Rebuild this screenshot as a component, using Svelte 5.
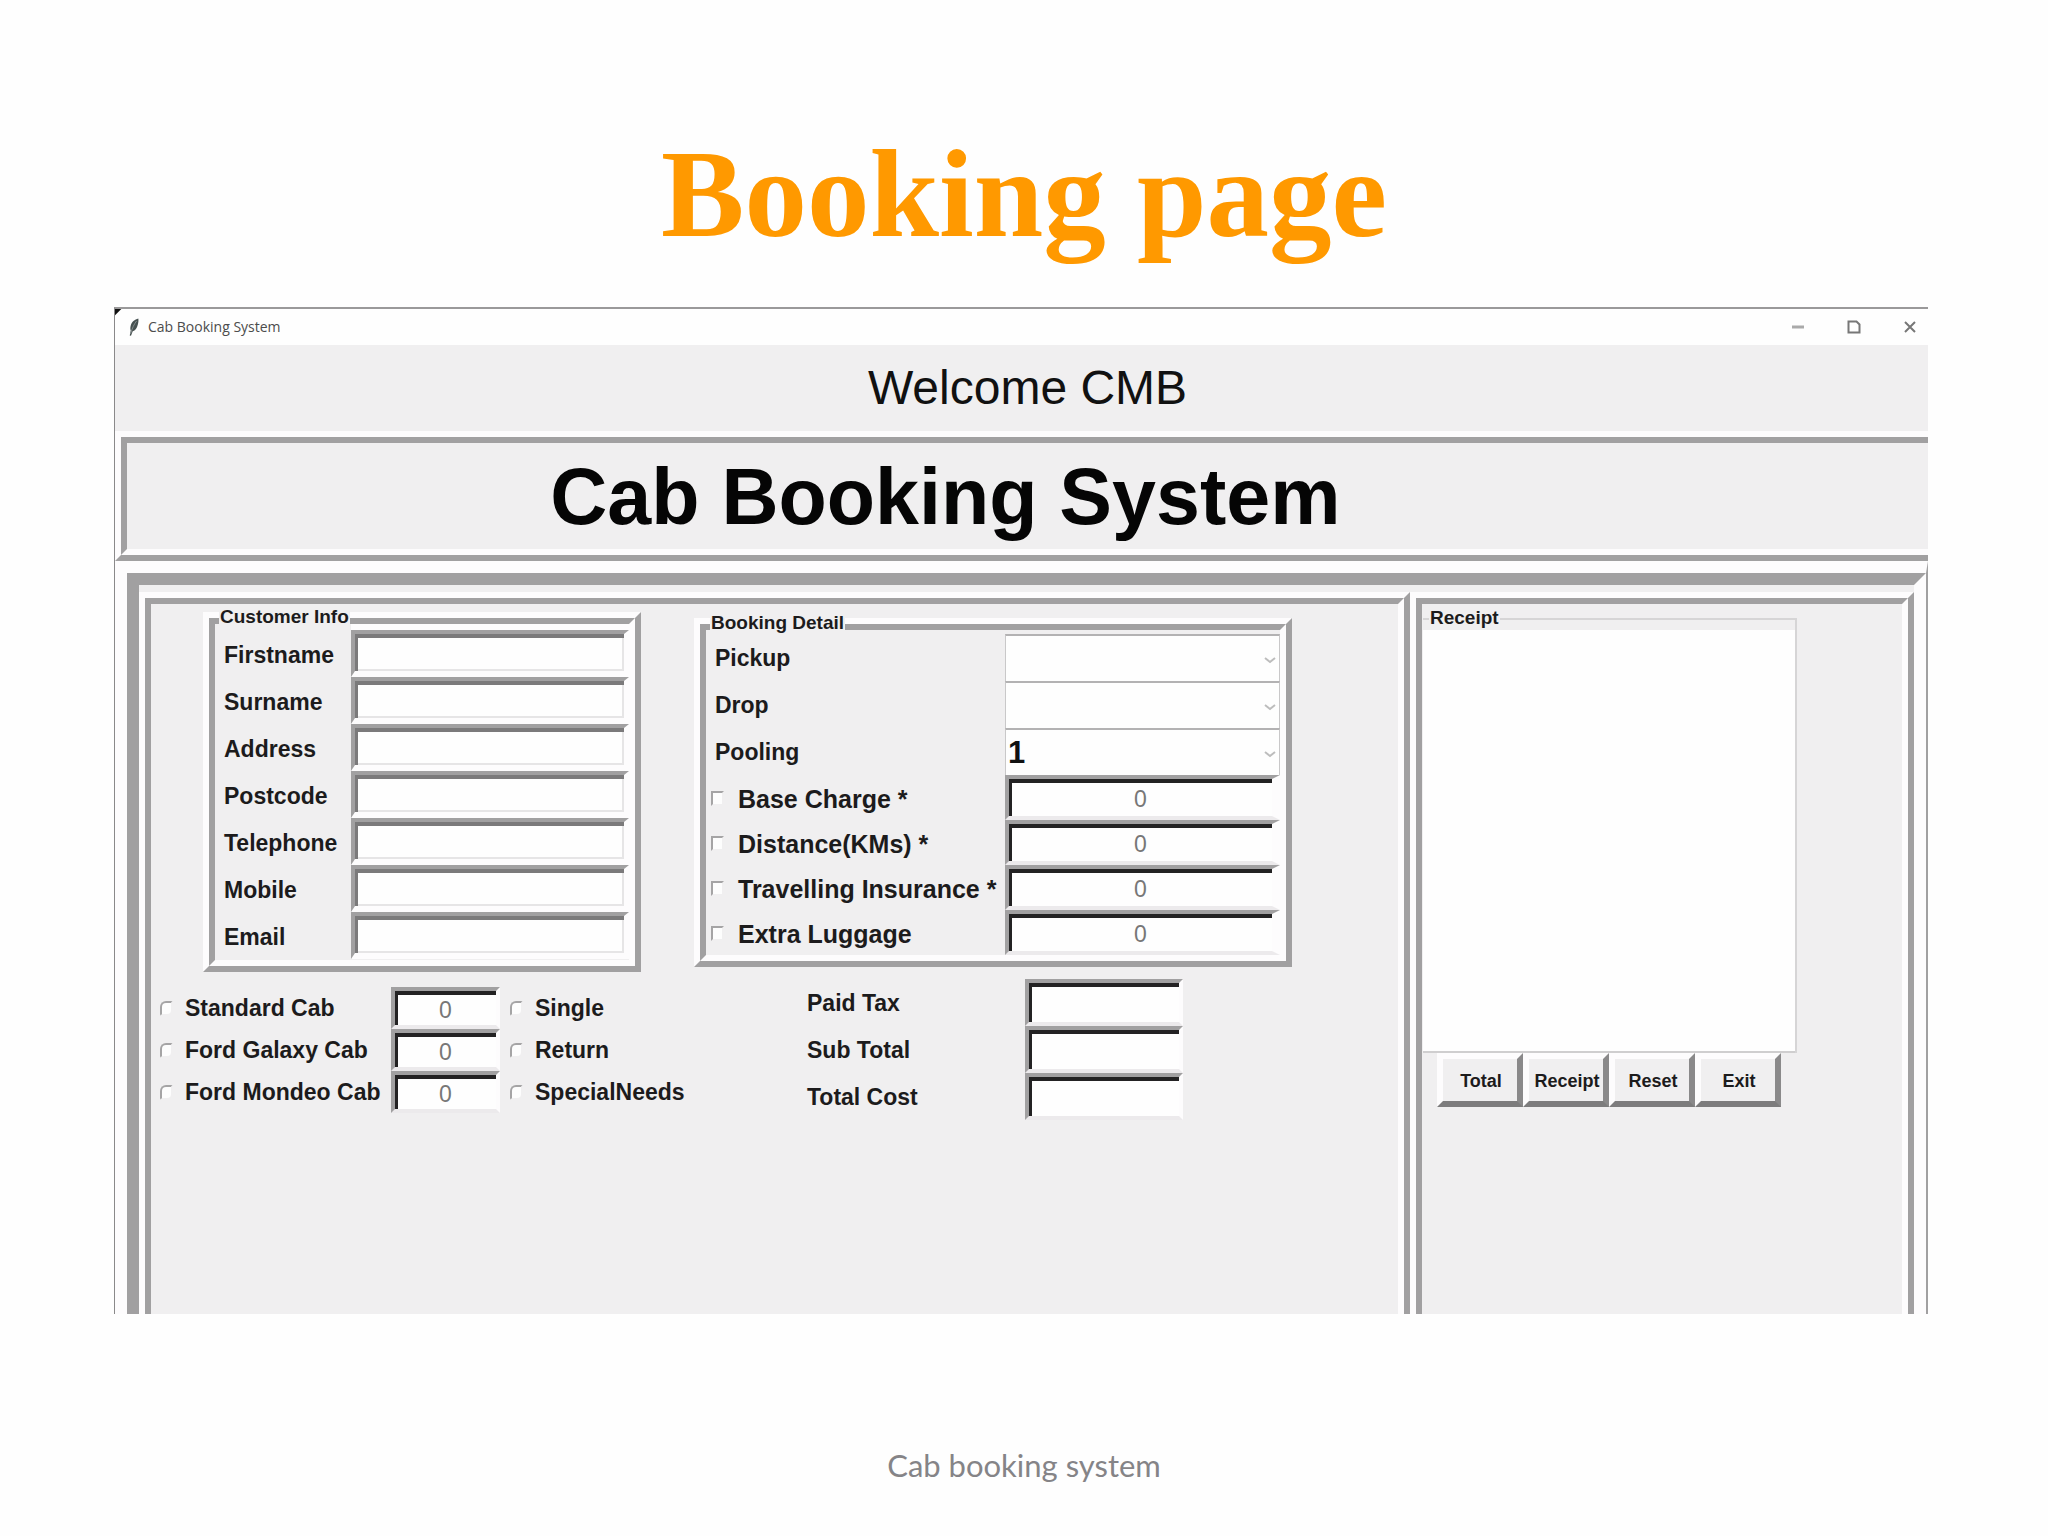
<script>
  const customer = ['Firstname', 'Surname', 'Address', 'Postcode', 'Telephone', 'Mobile', 'Email'];
  const trips = [
    { name: 'Pickup', options: [''] },
    { name: 'Drop', options: [''] },
    { name: 'Pooling', options: ['1', '2', '3', '4'] }
  ];
  const charges = ['Base Charge *', 'Distance(KMs) *', 'Travelling Insurance *', 'Extra Luggage'];
  const cabs = [
    { cab: 'Standard Cab', journey: 'Single' },
    { cab: 'Ford Galaxy Cab', journey: 'Return' },
    { cab: 'Ford Mondeo Cab', journey: 'SpecialNeeds' }
  ];
  const totals = ['Paid Tax', 'Sub Total', 'Total Cost'];
  const actions = ['Total', 'Receipt', 'Reset', 'Exit'];
</script>

<div class="slide">
  <h1>Booking page</h1>

  <main class="window">
    <header class="titlebar">
      <svg class="feather" viewBox="0 0 14 22" aria-hidden="true">
        <path d="M12 1C8 2 4 5 3 10c-.5 2-.3 4 .2 5L2 21l1.500.3L5.500 16c3-1 5-4 6-8 .6-2.500 1-5 .5-7z" fill="#465050" />
        <path d="M10 4C7 8 5 12 3 19" stroke="#8d9696" stroke-width="1" fill="none" />
      </svg>
      <span class="caption">Cab Booking System</span>
      <div class="controls">
        <button aria-label="Minimize">
          <svg viewBox="0 0 16 16"><path d="M2 8h12" stroke="#aaa" stroke-width="3" /></svg>
        </button>
        <button aria-label="Maximize">
          <svg viewBox="0 0 16 16"><path d="M2.500 2.500h8l3 3v8h-11z" stroke="#777" stroke-width="2" fill="none" /></svg>
        </button>
        <button aria-label="Close">
          <svg viewBox="0 0 16 16"><path d="M3 3l10 10M13 3L3 13" stroke="#777" stroke-width="2" /></svg>
        </button>
      </div>
    </header>

    <p class="welcome">Welcome CMB</p>

    <div class="banner">
      <div class="banner-in"><h2>Cab Booking System</h2></div>
    </div>

    <div class="frame">
      <div class="frame-in">
        <section class="ridge pane">
          <div class="groove pane-in booking">
            <div class="col-left">
              <fieldset class="customer">
                <legend>Customer Info</legend>
                <div class="ridge">
                  <div class="groove pair">
                    <div class="names">
                      {#each customer as name}
                        <label for={name}>{name}</label>
                      {/each}
                    </div>
                    <div class="fields">
                      {#each customer as name}
                        <input id={name} class="entry soft" type="text" />
                      {/each}
                    </div>
                  </div>
                </div>
              </fieldset>

              <div class="cabs">
                {#each cabs as row}
                  <label class="tick"><input type="radio" name="cab" />{row.cab}</label>
                  <input class="entry" type="text" value="0" disabled aria-label={row.cab + ' fare'} />
                  <label class="tick"><input type="radio" name="journey" />{row.journey}</label>
                {/each}
              </div>
            </div>

            <div class="col-right">
              <fieldset class="detail">
                <legend>Booking Detail</legend>
                <div class="ridge">
                  <div class="groove sheet">
                    {#each trips as trip}
                      <label class="trip" for={trip.name}>{trip.name}</label>
                      <div class="combo">
                        <select id={trip.name}>
                          {#each trip.options as option}
                            <option>{option}</option>
                          {/each}
                        </select>
                        <svg viewBox="0 0 12 8" aria-hidden="true"><path d="M1 2l5 4 5-4" stroke="#bdbdbd" stroke-width="2" fill="none" /></svg>
                      </div>
                    {/each}
                    {#each charges as charge}
                      <label class="tick large"><input type="checkbox" />{charge}</label>
                      <input class="entry charge" type="text" value="0" disabled aria-label={charge + ' amount'} />
                    {/each}
                  </div>
                </div>
              </fieldset>

              <div class="totals">
                {#each totals as name}
                  <label for={name}>{name}</label>
                  <input id={name} class="entry" type="text" />
                {/each}
              </div>
            </div>
          </div>
        </section>

        <section class="ridge pane">
          <div class="groove pane-in">
            <fieldset class="receipt">
              <legend>Receipt</legend>
              <textarea aria-label="Receipt"></textarea>
            </fieldset>
            <div class="actions">
              {#each actions as action}
                <button>{action}</button>
              {/each}
            </div>
          </div>
        </section>
      </div>
    </div>
  </main>

  <footer>Cab booking system</footer>
</div>

<style>
  :global(body) {
    margin: 0;
    background: #fefefe;
  }

  .slide {
    --face: #f0eff0;
    --shade: #a1a0a1;
    --light: #fdfcfd;
    min-height: 100vh;
    display: flex;
    flex-direction: column;
    box-sizing: border-box;
    font-family: "Liberation Sans", Arial, sans-serif;
    color: #1c1b1c;
  }

  h1 {
    margin: 0;
    padding: 119px 0 38px;
    font: bold 125px/150px "Liberation Serif", "Times New Roman", serif;
    text-align: center;
    color: #ff9900;
  }

  .window {
    flex: 1;
    display: flex;
    flex-direction: column;
    margin: 0 120px 0 114px;
    border-top: 2px solid #9a999a;
    border-left: 1px solid #8a898a;
    background: var(--face);
    overflow: hidden;
  }

  .titlebar {
    height: 36px;
    display: flex;
    align-items: center;
    padding-left: 13px;
    background: linear-gradient(135deg, #111 4px, #fefefe 5px);
  }

  .feather {
    width: 12px;
    height: 22px;
    margin-right: 8px;
  }

  .caption {
    font: 14px/20px "Open Sans", "Noto Sans", sans-serif;
    color: #4c4c4c;
  }

  .controls {
    margin-left: auto;
    display: flex;
  }

  .controls button {
    width: 56px;
    height: 32px;
    padding: 0 0 0 20px;
    border: 0;
    background: none;
  }

  .controls button:last-child {
    width: 46px;
  }

  .controls svg {
    display: block;
    width: 16px;
    height: 16px;
  }

  .welcome {
    margin: 0;
    padding-left: 12px;
    font-size: 48px;
    line-height: 86px;
    text-align: center;
    color: #111;
  }

  .banner {
    border: 6px solid;
    border-color: var(--light) transparent var(--shade) var(--light);
    border-right: 0;
  }

  .banner-in {
    border: 6px solid;
    border-color: var(--shade) transparent var(--light) var(--shade);
    border-right: 0;
  }

  h2 {
    margin: 0;
    padding: 1px 0 0 23.5%;
    font-size: 79px;
    line-height: 105px;
    color: #050505;
    white-space: nowrap;
  }

  .frame {
    flex: 1;
    display: flex;
    border-style: solid;
    border-width: 12px 2px 0 12px;
    border-color: var(--light) var(--shade) var(--light) var(--light);
  }

  .frame-in {
    flex: 1;
    display: grid;
    grid-template-columns: 1271fr 504fr;
    padding-top: 7px;
    border-style: solid;
    border-width: 12px 12px 0 12px;
    border-color: var(--shade) var(--light) var(--light) var(--shade);
  }

  .ridge {
    border: 6px solid;
    border-color: var(--light) var(--shade) var(--shade) var(--light);
  }

  .groove {
    border: 6px solid;
    border-color: var(--shade) var(--light) var(--light) var(--shade);
  }

  .pane {
    display: flex;
    border-bottom: 0;
  }

  .pane-in {
    flex: 1;
    border-bottom: 0;
  }

  .booking {
    display: flex;
    align-items: flex-start;
  }

  .col-left {
    width: 543px;
    padding-top: 8px;
  }

  .col-right {
    padding-top: 14px;
  }

  fieldset {
    position: relative;
    min-width: 0;
    margin: 0;
    padding: 0;
    border: 0;
  }

  legend {
    position: absolute;
    top: -5px;
    left: 16px;
    padding: 0 1px;
    background: var(--face);
    font-size: 19px;
    font-weight: bold;
    line-height: 20px;
  }

  label {
    font-size: 23px;
    font-weight: bold;
    white-space: nowrap;
  }

  .entry {
    display: block;
    box-sizing: border-box;
    width: 100%;
    height: 42px;
    margin: 0;
    padding: 4px 0 0;
    border: 4px solid;
    border-color: var(--shade) var(--light) #eceaec var(--shade);
    border-radius: 0;
    background: #fefefe;
    box-shadow: inset 3px 4px 0 #232223;
    font: 23px/26px "Liberation Sans", Arial, sans-serif;
    text-align: center;
    color: #777;
  }

  .soft {
    height: 47px;
    border-bottom: 6px solid var(--light);
    border-right: 5px solid var(--light);
    box-shadow: inset 3px 4px 0 #7b7a7b, inset -2px -2px 0 #e6e5e6;
  }

  .customer {
    width: 438px;
    margin-left: 52px;
  }

  .pair {
    display: flex;
    padding-bottom: 1px;
  }

  .names {
    width: 127px;
    padding: 8px 0 0 9px;
  }

  .names label {
    display: block;
    height: 47px;
    line-height: 47px;
  }

  .names label:last-child {
    height: 45px;
  }

  .fields {
    flex: 1;
    border-top: 6px solid var(--light);
  }

  .cabs {
    display: grid;
    grid-template-columns: 231px 109px 1fr;
    align-items: center;
    padding: 15px 0 0 9px;
  }

  .tick {
    display: flex;
    align-items: center;
    gap: 14px;
    line-height: 42px;
  }

  .cabs .tick {
    gap: 12px;
  }

  .cabs .tick:nth-child(3n) {
    padding-left: 10px;
  }

  .tick input {
    appearance: none;
    flex: none;
    box-sizing: border-box;
    width: 13px;
    height: 15px;
    margin: 0;
    border: 2px solid;
    border-color: #a5a4a5 var(--face) var(--face) #a5a4a5;
    background: #fdfdfd;
  }

  .tick input[type="radio"] {
    border-radius: 6px 2px 6px 2px;
  }

  .detail {
    width: 598px;
  }

  .sheet {
    display: grid;
    grid-template-columns: 299px 1fr;
    padding: 4px 0 0;
  }

  .trip {
    padding-left: 9px;
    line-height: 49px;
    height: 47px;
  }

  .combo {
    position: relative;
    height: 47px;
  }

  .combo select {
    appearance: none;
    display: block;
    box-sizing: border-box;
    width: 100%;
    height: 47px;
    margin: 0;
    padding: 0 2px;
    border: 1px solid #c9c8c9;
    border-top: 2px solid #b3b2b3;
    border-bottom: 0;
    border-radius: 0;
    background: #fefefe;
    font: bold 31px/40px "Liberation Sans", Arial, sans-serif;
    color: #111;
  }

  .combo svg {
    position: absolute;
    right: 4px;
    top: 22px;
    width: 12px;
    height: 8px;
    pointer-events: none;
  }

  .large {
    padding: 2px 0 0 5px;
    font-size: 25px;
  }

  .charge {
    height: 45px;
    border-right-width: 8px;
  }

  .totals {
    display: grid;
    grid-template-columns: 218px 158px;
    padding: 12px 0 0 113px;
  }

  .totals label,
  .totals .entry {
    height: 47px;
    line-height: 49px;
  }

  .receipt {
    width: 374px;
    margin: 14px 0 0 1px;
    box-sizing: border-box;
    padding-top: 10px;
    border: 2px solid #d6d5d6;
    border-left: 0;
    border-bottom: 0;
  }

  .receipt legend {
    top: -12px;
    left: 6px;
  }

  textarea {
    display: block;
    box-sizing: border-box;
    width: 100%;
    height: 423px;
    padding: 4px;
    border: 0;
    border-bottom: 2px solid #cfcecf;
    background: #fefefe;
    resize: none;
  }

  .actions {
    display: flex;
    padding-left: 15px;
  }

  .actions button {
    width: 86px;
    height: 54px;
    padding: 2px 0 0 2px;
    border: 6px solid;
    border-color: var(--light) #8a898a #7d7c7d var(--light);
    border-radius: 0;
    background: var(--face);
    font: bold 18px/20px "Liberation Sans", Arial, sans-serif;
    color: #1c1b1c;
  }

  footer {
    height: 222px;
    box-sizing: border-box;
    padding-top: 131px;
    font: 31px/40px Lato, sans-serif;
    text-align: center;
    color: #858487;
  }
</style>
